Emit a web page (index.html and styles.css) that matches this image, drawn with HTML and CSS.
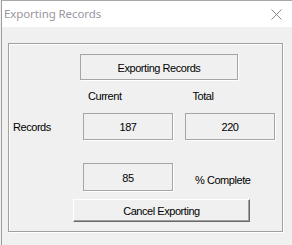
FILE: index.html
```html
<!DOCTYPE html>
<html>
<head>
<meta charset="utf-8">
<link rel="stylesheet" href="styles.css">
</head>
<body>
<div class="win">
  <div class="titlebar">
    <span class="title">Exporting Records</span>
    <svg class="close" width="11" height="11" viewBox="0 0 11 11"><path d="M0.5 0.5 L10.5 10.5 M10.5 0.5 L0.5 10.5" stroke="#8a8a8a" stroke-width="1" fill="none"/></svg>
  </div>
  <div class="client">
    <div class="group">
      <div class="row r1"><div class="panel hdr">Exporting Records</div></div>
      <div class="row r2"><span class="lbl cur">Current</span><span class="lbl tot">Total</span></div>
      <div class="row r3"><span class="lbl rec">Records</span><div class="panel box">187</div><div class="panel box box2">220</div></div>
      <div class="row r4"><div class="panel box box85">85</div><span class="lbl pct">% Complete</span></div>
      <div class="row r5"><button class="btn">Cancel Exporting</button></div>
    </div>
  </div>
</div>
</body>
</html>
```
FILE: styles.css
```css
html, body {
  margin: 0;
  padding: 0;
}
body {
  width: 292px;
  height: 245px;
  overflow: hidden;
  background: #f0f0f0;
  font-family: "Liberation Sans", Arial, sans-serif;
  font-size: 11px;
  letter-spacing: -0.45px;
  color: #000;
}
.win {
  margin-left: 1px;
  border-left: 1px solid #9c9c9c;
  border-top: 1px solid #a8a8a8;
  height: 244px;
  background: #f0f0f0;
}
.titlebar {
  height: 26px;
  background: #fff;
  display: flex;
  align-items: center;
  justify-content: space-between;
  padding: 0 10px 0 2px;
}
.title {
  font-family: "Noto Sans", "Open Sans", sans-serif;
  font-size: 11.5px;
  letter-spacing: -0.1px;
  color: #9a95a0;
  margin-top: -1px;
}
.close {
  display: block;
}
.client {
  padding: 16px 0 0 6px;
}
.group {
  width: 273px;
  height: 187px;
  border: 1px solid #a0a0a0;
  box-shadow: inset 1px 1px 0 #fff, 1px 1px 0 #fff;
}
.row {
  display: flex;
  align-items: center;
}
.panel {
  box-sizing: border-box;
  border: 1px solid #a5a5a5;
  box-shadow: 1px 1px 0 #fff;
  display: flex;
  align-items: center;
  justify-content: center;
}
.r1 {
  margin-top: 10px;
  padding-left: 71px;
}
.hdr {
  width: 158px;
  height: 26px;
  padding-top: 1px;
}
.r2 {
  margin-top: 10px;
  height: 13px;
  line-height: 13px;
}
.cur {
  margin-left: 79px;
}
.tot {
  margin-left: 71px;
}
.r3 {
  margin-top: 10px;
}
.rec {
  width: 74px;
  padding-left: 4px;
  box-sizing: border-box;
}
.box {
  width: 90px;
  height: 27px;
  padding-top: 1px;
}
.box2 {
  margin-left: 12px;
}
.r4 {
  margin-top: 23px;
  padding-left: 74px;
}
.box85 {
  height: 28px;
}
.pct {
  margin-left: 22px;
  padding-top: 6px;
}
.r5 {
  margin-top: 8px;
  padding-left: 64px;
}
.btn {
  box-sizing: border-box;
  width: 177px;
  height: 23px;
  margin: 0;
  padding: 0;
  font-family: "Liberation Sans", Arial, sans-serif;
  font-size: 11px;
  letter-spacing: -0.45px;
  color: #000;
  background: #f0f0f0;
  border: 1px solid;
  border-color: #fff #696969 #696969 #fff;
  box-shadow: inset -1px -1px 0 #a0a0a0;
}
```
